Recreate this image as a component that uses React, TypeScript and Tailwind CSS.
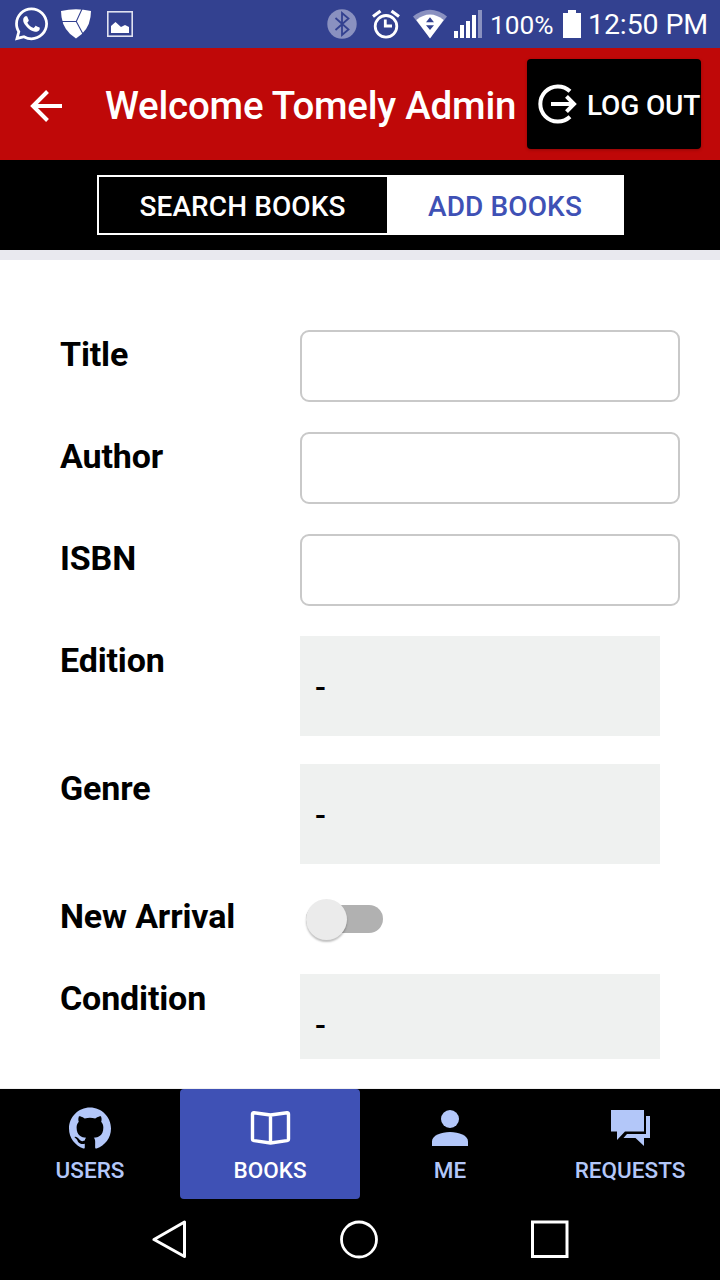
import { useState } from 'react';
import type { ReactNode } from 'react';
import { FaWhatsapp } from 'react-icons/fa';
import { SiGithub } from 'react-icons/si';

function ShieldIcon() {
  return (
    <svg className="ml-[12px] h-[30px] w-[30px]" viewBox="0 0 30 30" fill="#fff">
      <path d="M0 2 Q15 -1.3 30 2 L29.5 8 Q27.5 22 15 29.5 Q2.5 22 0.5 8Z" />
      <path d="M0 12.5H15.3L21 0M15.3 12.5L22.5 26" stroke="#334190" strokeWidth="1.1" fill="none" />
    </svg>
  );
}

function PictureIcon() {
  return (
    <svg className="ml-4 h-[26px] w-[26px]" viewBox="0 0 26 26">
      <rect x="0.8" y="0.8" width="24.4" height="24.4" fill="none" stroke="#dfe1f0" strokeWidth="1.6" />
      <path d="M4 22V15L8.5 11L14 16L18 14L22 16V22Z" fill="#fff" />
    </svg>
  );
}

function BluetoothIcon() {
  return (
    <svg className="h-[30px] w-[30px]" viewBox="0 0 30 30">
      <circle cx="15" cy="15" r="14.7" fill="#8a91c0" />
      <path d="M8.5 9L21.5 20.5L15 26V4L21.5 9.5L8.5 21" fill="none" stroke="#334190" strokeWidth="1.8" />
    </svg>
  );
}

function AlarmIcon() {
  return (
    <svg className="ml-[15px] h-[30px] w-[28px]" viewBox="0 0 28 30" fill="none" stroke="#fff">
      <circle cx="14" cy="17.3" r="10.8" strokeWidth="2.8" />
      <path d="M13.3 10.5V17H20" strokeWidth="2.8" />
      <path d="M1 7.5L8.5 2M27 7.5L19.5 2" strokeWidth="3.2" />
    </svg>
  );
}

function WifiIcon() {
  return (
    <svg className="ml-[13px] h-[30px] w-[34px]" viewBox="0 0 34 30">
      <path d="M0 7.5Q17 -6 34 7.5L17 29Z" fill="#8a91c0" />
      <path d="M3.3 11Q17 0 30.7 11L17 29.5Z" fill="#fff" />
      <path d="M13 13.2L17 8.3L21 13.2ZM13 16.2H21L17 21Z" fill="#334190" />
    </svg>
  );
}

function SignalIcon() {
  return (
    <svg className="ml-[7px] h-[30px] w-[28px]" viewBox="0 0 28 30" fill="#fff">
      <path d="M0 22h4v7H0zM6 16h4v13H6zM12 12h4v17h-4zM18 6h4v23h-4z" />
      <path d="M24 1h4v28h-4z" fill="#8a91c0" />
    </svg>
  );
}

function StatusBar() {
  return (
    <div className="flex h-12 shrink-0 items-center justify-between bg-[#334190] pr-[12px] pl-[15px] text-white">
      <div className="flex items-center">
        <FaWhatsapp className="mr-[1px] h-[38px] w-[33px]" />
        <ShieldIcon />
        <PictureIcon />
      </div>
      <div className="flex items-center">
        <BluetoothIcon />
        <AlarmIcon />
        <WifiIcon />
        <SignalIcon />
        <span className="ml-[8px] w-[64px] pt-[2px] text-[26.3px] leading-8 whitespace-nowrap">100%</span>
        <svg className="ml-[9px] h-[28px] w-[18px]" viewBox="0 0 18 28" fill="#fff">
          <path d="M5 0h8v3h5v25H0V3h5z" />
        </svg>
        <span className="ml-[7px] w-[120px] pt-[2px] text-[28.5px] leading-8 tracking-[-0.1px] whitespace-nowrap">
          12:50 PM
        </span>
      </div>
    </div>
  );
}

function Header() {
  return (
    <header className="flex h-28 shrink-0 items-center bg-[#bf0808] pl-[30px] text-white">
      <svg className="mt-1 h-8 w-8" viewBox="0 0 32 32" fill="none" stroke="#fff" strokeWidth="4">
        <path d="M32 16H3M17.5 1.5L3 16L17.5 30.5" />
      </svg>
      <h1 className="ml-[43px] w-[422px] pt-[4px] text-[38.5px] leading-[48px] font-medium tracking-[-0.22px] whitespace-nowrap">
        Welcome Tomely Admin
      </h1>
      <button className="mt-[-1px] flex h-[90px] w-[174px] items-center rounded-[4px] bg-black pl-[11px] shadow-[0_1px_3px_rgba(0,0,0,0.25)]">
        <svg className="h-10 w-10 shrink-0" viewBox="0 0 40 40" fill="none" stroke="#fff" strokeWidth="4">
          <path d="M32 7.2A17.6 17.6 0 1 0 32 32.8" />
          <path d="M13 20H36M28.5 12.3L36 20L28.5 27.7" />
        </svg>
        <span className="ml-[9px] pt-[4px] text-[28px] leading-8 font-medium tracking-[-0.15px] whitespace-nowrap">LOG OUT</span>
      </button>
    </header>
  );
}

function Segments() {
  return (
    <div className="flex h-[90px] shrink-0 justify-center bg-black pt-[15px]">
      <div className="flex h-[60px] w-[527px] border-2 border-white text-[28px] font-medium tracking-[0.1px]">
        <button className="w-[288px] pt-[4px] text-white">SEARCH BOOKS</button>
        <button className="flex-1 bg-white pt-[4px] pl-[2px] text-[#3f51b5]">ADD BOOKS</button>
      </div>
    </div>
  );
}

function Row({ label, className, children }: { label: string; className: string; children: ReactNode }) {
  return (
    <div className={`flex shrink-0 items-start pl-[60px] ${className}`}>
      <span className="w-[240px] pt-[4px] text-[34px] leading-10 font-bold tracking-[-0.15px] whitespace-nowrap">{label}</span>
      {children}
    </div>
  );
}

function TextField({ label }: { label: string }) {
  return (
    <Row label={label} className="h-[102px]">
      <input aria-label={label} className="h-[72px] w-[380px] rounded-[9px] border-2 border-[#c9c9c9] bg-white px-3 text-3xl outline-none" />
    </Row>
  );
}

function Picker() {
  return <div className="flex h-[100px] w-[360px] items-center bg-[#eff1f0] pt-[2px] pl-[15px] text-[32px] font-medium">-</div>;
}

function PickerField({ label }: { label: string }) {
  return (
    <Row label={label} className="h-[128px]">
      <Picker />
    </Row>
  );
}

function Toggle() {
  const [on, setOn] = useState(false);
  return (
    <button
      role="switch"
      aria-checked={on}
      aria-label="New Arrival"
      onClick={() => setOn(!on)}
      className={`mt-[13px] ml-[6px] flex h-7 w-[77px] items-center rounded-full bg-[#b1b1b1] ${on ? 'justify-end' : 'justify-start'}`}
    >
      <span className="h-[41px] w-[41px] rounded-full bg-[#ebebeb] shadow-[0_2px_2px_rgba(0,0,0,0.25)]" />
    </button>
  );
}

function Tab({ label, active, children }: { label: string; active?: boolean; children: ReactNode }) {
  return (
    <button
      className={`flex h-[110px] w-[180px] flex-col items-center rounded-[4px] pt-[15px] ${active ? 'bg-[#3f51b5] text-white' : 'text-[#b3c7f9]'}`}
    >
      <span className="flex h-12 w-12 items-center justify-center">{children}</span>
      <span className="mt-[2px] text-[22.5px] leading-8 font-medium">{label}</span>
    </button>
  );
}

function TabBar() {
  return (
    <nav className="flex h-[110px] shrink-0 bg-black">
      <Tab label="USERS">
        <SiGithub className="h-[42px] w-[42px]" />
      </Tab>
      <Tab label="BOOKS" active>
        <svg className="h-12 w-12" viewBox="0 0 48 48">
          <path
            d="M24.5 11L8 8.7Q6.5 8.5 6.5 10V35Q6.5 36.3 8 36.6L24.5 39L41 36.6Q42.5 36.3 42.5 35V10Q42.5 8.5 41 8.7ZV39"
            fill="none"
            stroke="currentColor"
            strokeWidth="3.4"
            strokeLinejoin="round"
          />
        </svg>
      </Tab>
      <Tab label="ME">
        <svg className="h-12 w-12" viewBox="0 0 48 48" fill="currentColor">
          <circle cx="24" cy="15" r="9" />
          <path d="M6 42V37.5C6 31.5 15 28 24 28S42 31.5 42 37.5V42Z" />
        </svg>
      </Tab>
      <Tab label="REQUESTS">
        <svg className="h-12 w-12" viewBox="0 0 48 48" fill="currentColor">
          <path d="M5 6H38V27.5H19L11 36V27.5H5Z" />
          <path d="M40 12H44V34H38V42L29.5 34H17.5L21 30H40Z" />
        </svg>
      </Tab>
    </nav>
  );
}

function SystemNav() {
  return (
    <div className="flex h-[81px] shrink-0 items-start bg-black pt-[20px] pl-[152px]">
      <svg className="h-10 w-[36px]" viewBox="0 0 36 40" fill="none" stroke="#fff" strokeWidth="3" strokeLinejoin="round">
        <path d="M2 20.5L32.5 3V37.5Z" />
      </svg>
      <svg className="ml-[151px] h-10 w-10" viewBox="0 0 40 40" fill="none" stroke="#fff" strokeWidth="2.8">
        <circle cx="20" cy="20.5" r="17.5" />
      </svg>
      <svg className="ml-[151px] h-10 w-[39px]" viewBox="0 0 39 40" fill="none" stroke="#fff" strokeWidth="3">
        <rect x="2.5" y="3" width="34.5" height="34.5" />
      </svg>
    </div>
  );
}

export default function App() {
  return (
    <div className="flex h-[1280px] w-[720px] flex-col overflow-hidden bg-white font-['Roboto',sans-serif] text-black">
      <StatusBar />
      <Header />
      <Segments />
      <div className="h-[10px] shrink-0 bg-[#e9e9ef]" />
      <main className="flex h-[799px] shrink-0 flex-col pt-[70px]">
        <TextField label="Title" />
        <TextField label="Author" />
        <TextField label="ISBN" />
        <PickerField label="Edition" />
        <PickerField label="Genre" />
        <Row label="New Arrival" className="h-[82px]">
          <Toggle />
        </Row>
        <Row label="Condition" className="h-[85px] overflow-hidden">
          <Picker />
        </Row>
      </main>
      <div className="h-[30px] shrink-0 border-b border-[#f0f0f0]" />
      <TabBar />
      <SystemNav />
    </div>
  );
}
